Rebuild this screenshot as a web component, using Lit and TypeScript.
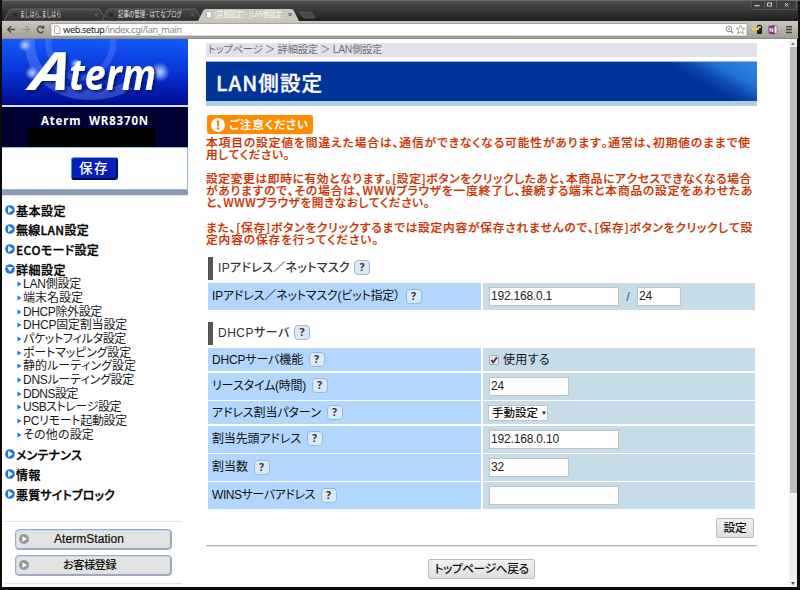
import { LitElement, html, svg, css } from "lit";
import { customElement, property } from "lit/decorators.js";
import { classMap } from "lit/directives/class-map.js";

/** A single line of text whose tracking is adjusted to fill a given width. */
@customElement("fit-text")
export class FitText extends LitElement {
  @property({ type: Number }) w = 0;
  @property() text = "";

  static styles = css`
    :host { display: inline-block; white-space: pre; flex: none; }
    .run { display: inline-block; font-feature-settings: "palt"; font-kerning: none; }
  `;

  updated() {
    const run = this.renderRoot.querySelector<HTMLElement>(".run")!;
    run.style.letterSpacing = "0px";
    const natural = run.getBoundingClientRect().width;
    const gap = (this.w - natural) / Math.max(1, [...this.text].length);
    run.style.letterSpacing = `${gap}px`;
  }

  render() {
    return html`<span class="run">${this.text}</span>`;
  }
}

@customElement("help-mark")
export class HelpMark extends LitElement {
  static styles = css`
    :host {
      display: flex; align-items: center; justify-content: center; flex: none;
      box-sizing: border-box; width: 16px; height: 15px;
      border: 1px solid #92b9e4; border-radius: 4px; background: #dce9f5;
      font: bold 10.500px/13px "Noto Sans", sans-serif; color: #333;
    }
  `;
  render() {
    return html`?`;
  }
}

@customElement("browser-chrome")
export class BrowserChrome extends LitElement {
  static styles = css`
    :host { display: block; height: 39px; }
    svg { display: block; }
    .tab { font: 7.5px "Noto Sans CJK JP", sans-serif; fill: #e6e6e6; }
    .active { fill: #fbfaf6; }
    .url { font: 9.3px "Noto Sans", sans-serif; fill: #222; }
    .path { fill: #888; }
    .n { font: bold 6px "Liberation Sans", sans-serif; fill: #fff; }
  `;
  render() {
    return html`<svg width="800" height="39" viewBox="0 0 800 39">
      <defs>
        <linearGradient id="bar" x2="0" y2="1"><stop stop-color="#505050" /><stop offset="1" stop-color="#1f1f1f" /></linearGradient>
        <linearGradient id="tool" x2="0" y2="1"><stop stop-color="#cbc7bf" /><stop offset="1" stop-color="#a29d93" /></linearGradient>
        <linearGradient id="off" x2="0" y2="1"><stop stop-color="#4a4a4a" /><stop offset="1" stop-color="#2d2d2d" /></linearGradient>
      </defs>
      <rect width="800" height="39" fill="#111" />
      <rect width="798" height="21" fill="url(#bar)" />
      <rect width="800" height="1" fill="#6c6c6c" />
      <path d="M4 21L9 11Q10 9 12 9H98Q100 9 101 11L106 21Z" fill="url(#off)" stroke="#777" stroke-width=".7" />
      <path d="M102 21L107 11Q108 9 110 9H194Q196 9 197 11L202 21Z" fill="url(#off)" stroke="#777" stroke-width=".7" />
      <path d="M299 12H310Q312 12 313 14L315 18H305Q303 18 302 16Z" fill="#484848" stroke="#6a6a6a" stroke-width=".5" />
      <path d="M198 21L203 11Q204 9 206 9H291Q293 9 294 11L299 21Z" fill="#cbc7bf" />
      <rect x="2" y="21" width="796" height="18" fill="url(#tool)" />
      <circle cx="15" cy="15" r="3" fill="#292929" stroke="#454545" />
      <circle cx="111" cy="15" r="3" fill="#292929" stroke="#454545" />
      <text class="tab" x="20" y="17.300" textLength="41" lengthAdjust="spacingAndGlyphs">ましはら, ましはら</text>
      <text class="tab" x="118" y="17.300" textLength="64" lengthAdjust="spacingAndGlyphs">記事の管理 - はてなブログ</text>
      <text class="tab active" x="215" y="17.300" textLength="67" lengthAdjust="spacingAndGlyphs">[詳細設定] - [LAN側設定</text>
      <path d="M206.500 11.500H209.500L211.500 13.500V18H206.500Z" fill="#fff" stroke="#999" stroke-width=".6" />
      <path d="M94.500 13.500l3 3m0-3l-3 3M191 13.500l3 3m0-3l-3 3" stroke="#666" />
      <path d="M288.500 13l3.200 3.200m0-3.200l-3.200 3.200" stroke="#555" />
      <path d="M751.500 1V7.500Q751.500 9.500 754 9.500H797M764.500 1V9M776.500 1V9M796.500 1V9" fill="none" stroke="#5c5c5c" stroke-width=".8" />
      <rect x="752" y="1" width="44" height="8" fill="#3d3d3d" />
      <path d="M764.500 1V9M776.500 1V9" stroke="#666" stroke-width=".7" />
      <path d="M754.500 5.700H759.500" stroke="#ccc" stroke-width="1.300" />
      <rect x="767.500" y="3" width="4" height="3" fill="none" stroke="#ccc" stroke-width="1" />
      <path d="M785 3l3 3.500m0-3.500l-3 3.500" stroke="#ccc" />
      <path d="M15 29.500H8M11 26.300L7.800 29.500L11 32.700" fill="none" stroke="#4c4a45" stroke-width="1.400" />
      <path d="M22 29.500H29M26 26.300L29.200 29.500L26 32.700" fill="none" stroke="#8e8b84" stroke-width="1" />
      <path d="M43.300 27.800A3.200 3.200 0 1 0 43.500 31" fill="none" stroke="#4c4a45" stroke-width="1.500" />
      <path d="M40.500 28.800H44.300V25.300Z" fill="#4c4a45" />
      <rect x="51" y="23.500" width="696" height="12.500" fill="#fff" stroke="#9b978e" stroke-width=".8" />
      <path d="M54.500 26H58L60 28V33.500H54.500Z" fill="#fff" stroke="#999" stroke-width=".8" />
      <text class="url" x="63" y="33" textLength="119">web.setup<tspan class="path">/index.cgi/lan_main</tspan></text>
      <circle cx="729" cy="29" r="2.800" fill="none" stroke="#8a8a8a" /><path d="M731 31L733 33" stroke="#8a8a8a" stroke-width="1.400" /><circle cx="729" cy="29" r="1" fill="#999" />
      <path d="M740.500 25L741.700 28.200L745 28.400L742.400 30.500L743.300 33.800L740.500 31.900L737.700 33.800L738.600 30.500L736 28.400L739.300 28.200Z" fill="#fff" stroke="#8a8a8a" stroke-width=".8" />
      <rect x="757" y="28" width="5" height="6" rx="1" fill="#222" /><path d="M757.500 28V26.500Q757.500 25.300 759 25.300H760Q761.500 25.300 761.500 26.500V29" fill="none" stroke="#222" stroke-width="1.200" />
      <path d="M752 28.700H759" stroke="#ffd800" stroke-width="1.600" /><path d="M757.300 26.800L759.500 28.700L757.300 30.600Z" fill="#ffd800" />
      <rect x="773" y="26" width="4" height="7.500" fill="#f3e7f4" stroke="#80397b" stroke-width=".6" />
      <path d="M768.500 26L774.500 25V34.500L768.500 33.500Z" fill="#80397b" /><text class="n" x="769.300" y="31.900">N</text>
      <path d="M786 26.700H792M786 29.600H792M786 32.500H792" stroke="#45433f" stroke-width="1.500" />
      <rect x="2" y="38" width="796" height="1" fill="#8f8c86" />
      <rect width="2" height="39" fill="#111" />
    </svg>`;
  }
}

type Entry = { t: string; w: number; open?: boolean };

const ball = (open: boolean) => html`<svg class="ball" width="10" height="10" viewBox="0 0 10 10">
  <circle cx="5" cy="5" r="4.800" fill="#2173e0" />
  ${svg`<path d=${open ? "M2 3H8L5 7.800Z" : "M3.200 1.800L8 5L3.200 8.200Z"} fill="#fff" />`}</svg>`;

@customElement("side-bar")
export class SideBar extends LitElement {
  static styles = css`
    :host { display: block; width: 186px; flex: none; color: #000; }
    svg { display: block; flex: none; overflow: visible; }
    .banner { border-bottom: 2px solid #d8dced; height: 66px; }
    .logo { font-family: "Open Sans", "Noto Sans", sans-serif; font-weight: 700; font-style: italic; }
    .model {
      height: 40px; background: #000033; color: #fff; display: flex; flex-direction: column;
      align-items: center; box-sizing: border-box; padding-top: 6px;
      font: 700 11.500px/15px "Noto Sans", sans-serif;
    }
    .mask { width: 127px; height: 19px; background: #000; margin-right: 8px; }
    .save {
      box-sizing: border-box; height: 43px; border: 1px solid #8dbcd2; border-left: 0;
      display: flex; justify-content: center; padding-top: 9px;
    }
    .savebtn {
      width: 47px; height: 23px; box-sizing: border-box; border-radius: 3px; background: #0520ba;
      border: 1px solid; border-width: 1px 2px 2px 1px; border-color: #7da0ee #00105c #000b48 #5d85e8; color: #fff;
      font: 500 13.5px/19px "Noto Sans CJK JP", sans-serif; text-align: center;
    }
    .band { height: 5px; background: #8d99b7; border-bottom: 1px solid #e6e6ee; }
    .menu { padding: 4.300px 0 0 3px; }
    .main { display: flex; align-items: center; height: 19.700px; font: 500 12px/19px "Noto Sans CJK JP", sans-serif; -webkit-text-stroke: .3px #000; gap: 1px; }
    .ball { margin-top: -1px; }
    .subs { padding: 0 0 3px 12px; margin-top: -1px; }
    .sub { display: flex; align-items: center; gap: 1px; height: 13.670px; font: 12px/13px "Liberation Sans", "Noto Sans CJK JP", sans-serif; color: #1a1a1a; }
    .links { margin: 17px 6px 0 3px; border: 1px solid #e2e2e2; border-width: 1px 0; padding: 7px 10px; display: flex; flex-direction: column; gap: 5px; }
    .link {
      display: flex; align-items: center; box-sizing: border-box; height: 21px; border: 1px solid #93a9cf; border-radius: 4px;
      box-shadow: inset -1px -1px 1px #a3a3a3, inset 1px 1px #cad9ee; background: #e3e3e3; padding-left: 3px;
      font: 12px/18px "Liberation Sans", "Noto Sans CJK JP", sans-serif; color: #111;
    }
    .a { margin-left: 25px; padding-bottom: 1px; -webkit-text-stroke: .2px #111; }
    .b { margin-left: 34px; padding-bottom: 1px; font-size: 11.300px; font-weight: 500; }
  `;

  before: Entry[] = [
    { t: "基本設定", w: 50 }, { t: "無線LAN設定", w: 73 }, { t: "ECOモード設定", w: 83 }, { t: "詳細設定", w: 50, open: true },
  ];
  subs: Entry[] = [
    { t: "LAN側設定", w: 58 }, { t: "端末名設定", w: 60 }, { t: "DHCP除外設定", w: 79 }, { t: "DHCP固定割当設定", w: 104 },
    { t: "パケットフィルタ設定", w: 103 }, { t: "ポートマッピング設定", w: 108 }, { t: "静的ルーティング設定", w: 113 },
    { t: "DNSルーティング設定", w: 111 }, { t: "DDNS設定", w: 55 }, { t: "USBストレージ設定", w: 98 },
    { t: "PCリモート起動設定", w: 104 }, { t: "その他の設定", w: 71 },
  ];
  after: Entry[] = [{ t: "メンテナンス", w: 66 }, { t: "情報", w: 25 }, { t: "悪質サイトブロック", w: 99 }];

  main(e: Entry) {
    return html`<div class="main">${ball(!!e.open)}<fit-text .w=${e.w} .text=${e.t}></fit-text></div>`;
  }

  render() {
    const arrow = html`<svg width="10" height="10" viewBox="0 0 10 10"><circle cx="5" cy="5" r="5" fill="#999" /><path d="M3.500 2.300L7.700 5L3.500 7.700Z" fill="#fff" /></svg>`;
    return html`
      <div class="banner"><svg width="186" height="66" viewBox="0 0 186 66">
        <defs>
          <linearGradient id="sky" x2="0" y2="1"><stop stop-color="#1459fa" /><stop offset=".5" stop-color="#0834d6" /><stop offset="1" stop-color="#000b91" /></linearGradient>
          <radialGradient id="glow"><stop stop-color="#c4d4ff" /><stop offset=".5" stop-color="#8faaff" stop-opacity=".7" /><stop offset="1" stop-color="#6c90ff" stop-opacity="0" /></radialGradient>
          <filter id="shade" x="-10%" y="-10%" width="120%" height="130%"><feDropShadow dx="2" dy="2" stdDeviation="1" flood-color="#000a50" flood-opacity=".8" /></filter>
        </defs>
        <rect width="186" height="66" fill="url(#sky)" />
        <path d="M28 0C26 32 53 56 88 56C106 56 119 51 128 46" fill="none" stroke="#7895ff" stroke-opacity=".38" stroke-width="10" />
        <path d="M46 0C46 20 58 38 76 39C97 40 113 20 111 0" fill="none" stroke="#7895ff" stroke-opacity=".3" stroke-width="6" />
        <circle cx="23" cy="6" r="7" fill="url(#glow)" /><circle cx="30" cy="34" r="7" fill="url(#glow)" />
        <circle cx="158" cy="33" r="10" fill="url(#glow)" /><circle cx="74" cy="25" r="6" fill="url(#glow)" />
        <g class="logo" fill="#fff" filter="url(#shade)">
          <text transform="translate(27 51) skewX(-9)" font-size="53" textLength="39" lengthAdjust="spacingAndGlyphs">A</text>
          <text x="67" y="51" font-size="43" textLength="87" lengthAdjust="spacingAndGlyphs">term</text>
        </g></svg></div>
      <div class="model"><fit-text .w=${108} .text=${"Aterm  WR8370N"}></fit-text><div class="mask"></div></div>
      <div class="save"><div class="savebtn"><fit-text .w=${30} .text=${"保存"}></fit-text></div></div>
      <div class="band"></div>
      <div class="menu">
        ${this.before.map((e) => this.main(e))}
        <div class="subs">${this.subs.map((e) => html`<div class="sub">
          <svg width="5" height="7" viewBox="0 0 5 7"><path d="M.500 .500L4.500 3L.500 5.500Z" fill="#1f74e8" /></svg>
          <fit-text .w=${e.w} .text=${e.t}></fit-text></div>`)}</div>
        ${this.after.map((e) => this.main(e))}
      </div>
      <div class="links">
        <div class="link">${arrow}<fit-text class="a" .w=${70} .text=${"AtermStation"}></fit-text></div>
        <div class="link">${arrow}<fit-text class="b" .w=${53} .text=${"お客様登録"}></fit-text></div>
      </div>`;
  }
}

@customElement("app-root")
export class AppRoot extends LitElement {
  static styles = css`
    :host { display: block; width: 800px; height: 590px; overflow: hidden; background: #fff; }
    .body { display: flex; box-sizing: border-box; height: 551px; border: solid #0b0b0b; border-width: 0 3px 3px 2px; overflow: hidden; background: #fff; }
    .content { width: 551px; margin-left: 18px; flex: none; font: 12px/14px "Liberation Sans", "Noto Sans CJK JP", sans-serif; color: #111; }
    .crumb { margin-top: 4px; height: 14px; background: #e2e2ee; color: #707070; display: flex; align-items: center; font-size: 10.300px; padding-left: 2px; }
    .title {
      margin-top: 4px; height: 45px; box-sizing: border-box; border-top: 1px solid #8fb4dd; border-bottom: 5px solid #b3ccdd;
      background: linear-gradient(29deg, transparent 50%, #0b47ae 62%, #2272d3 76%, #2e88e5 100%) right / 120px 100% no-repeat, #003399;
      display: flex; align-items: center; padding-left: 10px; color: #fff; font-size: 20.500px; line-height: 30px; font-weight: 500; font-family: "Noto Sans CJK JP", sans-serif; -webkit-text-stroke: .3px #fff;
    }
    .badge { display: flex; align-items: center; gap: 4px; width: 106px; height: 19px; box-sizing: border-box; margin: 9px 0 1.500px 1px; padding-left: 4px; border-radius: 3px; background: #ff8c00; color: #fff; font-size: 11.700px; font-weight: 700; }
    .warn { display: flex; flex-direction: column; color: #cc3300; font-family: "Noto Sans CJK JP", sans-serif; font-weight: 500; font-size: 11.700px; -webkit-text-stroke: .2px #cc3300; }
    .warn fit-text, .gap { height: 12.180px; line-height: 12.180px; }
    .head { display: flex; align-items: center; gap: 4px; height: 23px; margin-left: 2px; border-left: 5px solid #555; box-sizing: border-box; padding: 0 0 2px 5px; color: #333; font-weight: 500; }
    .one { margin-top: 12px; }
    .two { margin-top: 12px; }
    .grid { display: grid; grid-template-columns: 273px 272px; gap: 2px; margin-left: 2px; }
    .first { grid-template-rows: 27px; margin-top: 3px; }
    .dhcp { grid-template-rows: 23px 27px 23px 26.500px 26.500px 27px; gap: 1.700px 2px; margin-top: 3px; }
    .th { background: #b3d6ff; display: flex; align-items: center; gap: 5.500px; padding: 0 0 1px 4px; }
    .short { padding-bottom: 0; }
    .td { background: #c6dce9; display: flex; align-items: center; padding-left: 6px; }
    .input { box-sizing: border-box; width: 130px; height: 19px; border: 1px solid #bfc4c8; background: #fff; font-size: 12px; line-height: 17px; padding-left: 1px; color: #222; }
    .half { width: 80px; }
    .mini { width: 44px; }
    .slash { width: 18px; text-align: center; color: #555; font-size: 13px; }
    .select { display: flex; align-items: center; gap: 4px; width: 60px; height: 16px; box-sizing: border-box; margin-left: -1px; padding-left: 3px; border: 1px solid #c0c4c8; background: #fff; font-weight: 500; font-size: 11.500px; }
    .check { width: 10px; height: 10px; margin-right: 4px; }
    .btn { box-sizing: border-box; height: 20px; border: 1px solid #bbb; border-radius: 2px; background: linear-gradient(#f2f2f2, #dedede); display: flex; align-items: center; justify-content: center; color: #111; font-weight: 500; font-size: 11.700px; }
    .btn fit-text { padding-bottom: 1px; }
    .apply { width: 38px; margin: 9px 3px 7px auto; }
    .rule { height: 1px; background: #b4b4b4; border-bottom: 1px solid #e6e6e6; margin-bottom: 12px; }
    .back { width: 107px; margin-left: 222px; }
    .bar { margin-left: auto; width: 8px; flex: none; background: #f1f1f1; display: flex; flex-direction: column; align-items: center; }
    .up, .down { height: 8px; display: flex; align-items: center; }
    .thumb { width: 7px; height: 446px; background: #bcbcbc; }
    .down { margin-top: auto; }
  `;

  warnings: [string, number][] = [
    ["本項目の設定値を間違えた場合は、通信ができなくなる可能性があります。通常は、初期値のままで使", 545],
    ["用してください。", 84],
    ["", 0],
    ["設定変更は即時に有効となります。[設定]ボタンをクリックしたあと、本商品にアクセスできなくなる場合", 546],
    ["がありますので、その場合は、WWWブラウザを一度終了し、接続する端末と本商品の設定をあわせたあ", 547],
    ["と、WWWブラウザを開きなおしてください。", 224],
    ["", 0],
    ["また、[保存]ボタンをクリックするまでは設定内容が保存されませんので、[保存]ボタンをクリックして設", 547],
    ["定内容の保存を行ってください。", 173],
  ];

  th(text: string, w: number, short = false) {
    return html`<div class=${classMap({ th: true, short })}><fit-text .w=${w} .text=${text}></fit-text><help-mark></help-mark></div>`;
  }

  field(text: string, w: number, size = "") {
    return html`<div class=${classMap({ input: true, half: size === "half", mini: size === "mini" })}>${text ? html`<fit-text .w=${w} .text=${text}></fit-text>` : ""}</div>`;
  }

  render() {
    return html`
      <browser-chrome></browser-chrome>
      <div class="body">
        <side-bar></side-bar>
        <div class="content">
          <div class="crumb"><fit-text .w=${174} .text=${"トップページ ＞ 詳細設定 ＞ LAN側設定"}></fit-text></div>
          <div class="title"><fit-text .w=${107} .text=${"LAN側設定"}></fit-text></div>
          <div class="badge">
            <svg width="14" height="14" viewBox="0 0 14 14"><circle cx="7" cy="7" r="7" fill="#fff" /><path d="M5.700 2.500H8.300L7.700 8.500H6.300Z" fill="#f47b00" /><circle cx="7" cy="10.500" r="1.200" fill="#f47b00" /></svg>
            <fit-text .w=${80} .text=${"ご注意ください"}></fit-text>
          </div>
          <div class="warn">${this.warnings.map(([t, w]) => (t ? html`<fit-text .w=${w} .text=${t}></fit-text>` : html`<div class="gap"></div>`))}</div>
          <div class="head one"><fit-text .w=${132} .text=${"IPアドレス／ネットマスク"}></fit-text><help-mark></help-mark></div>
          <div class="grid first">
            ${this.th("IPアドレス／ネットマスク(ビット指定）", 188)}
            <div class="td">${this.field("192.168.0.1", 61)}<div class="slash">/</div>${this.field("24", 13, "mini")}</div>
          </div>
          <div class="head two"><fit-text .w=${72} .text=${"DHCPサーバ"}></fit-text><help-mark></help-mark></div>
          <div class="grid dhcp">
            ${this.th("DHCPサーバ機能", 91, true)}
            <div class="td">
              <svg class="check" viewBox="0 0 10 10"><rect x=".5" y=".5" width="9" height="9" rx="1" fill="#e8e8e8" stroke="#aaa" /><path d="M2.300 5L4.300 7.300L8 2.300" fill="none" stroke="#333" stroke-width="1.800" /></svg>
              <fit-text .w=${47} .text=${"使用する"}></fit-text>
            </div>
            ${this.th("リースタイム(時間)", 94)}
            <div class="td">${this.field("24", 13, "half")}</div>
            ${this.th("アドレス割当パターン", 109, true)}
            <div class="td"><div class="select"><fit-text .w=${46} .text=${"手動設定"}></fit-text><svg width="4" height="4" viewBox="0 0 4 4"><path d="M0 .5H4L2 4Z" fill="#222" /></svg></div></div>
            ${this.th("割当先頭アドレス", 89)}
            <div class="td">${this.field("192.168.0.10", 68)}</div>
            ${this.th("割当数", 36)}
            <div class="td">${this.field("32", 13, "half")}</div>
            ${this.th("WINSサーバアドレス", 103)}
            <div class="td">${this.field("", 0)}</div>
          </div>
          <div class="btn apply"><fit-text .w=${23} .text=${"設定"}></fit-text></div>
          <div class="rule"></div>
          <div class="btn back"><fit-text .w=${94} .text=${"トップページへ戻る"}></fit-text></div>
        </div>
        <div class="bar">
          <div class="up"><svg width="4" height="3" viewBox="0 0 4 3"><path d="M2 0L4 3H0Z" fill="#888" /></svg></div>
          <div class="thumb"></div>
          <div class="down"><svg width="4" height="3" viewBox="0 0 4 3"><path d="M0 0H4L2 3Z" fill="#555" /></svg></div>
        </div>
      </div>`;
  }
}
